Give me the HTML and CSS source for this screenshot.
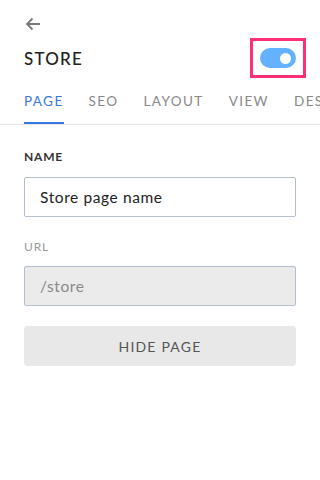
FILE: index.html
```html
<!DOCTYPE html>
<html lang="en">
<head>
  <meta charset="UTF-8" />
  <title>Store</title>
  <meta name="viewport" content="width=device-width, initial-scale=1">
  <link rel="stylesheet" href="styles.css">
</head>
<body>
  <div class="top">
    <a class="back" href="#">
      <svg width="16" height="14" viewBox="0 0 16 14"><path d="M15 7H2M7.5 1.5L2 7l5.5 5.5" fill="none" stroke="#777" stroke-width="1.8"/></svg>
    </a>
    <div class="title-row">
      <h1>STORE</h1>
      <div class="toggle-box">
        <span class="toggle"><span class="knob"></span></span>
      </div>
    </div>
  </div>

  <nav class="tabs">
    <a class="tab active" href="#">PAGE</a>
    <a class="tab" href="#">SEO</a>
    <a class="tab" href="#">LAYOUT</a>
    <a class="tab" href="#">VIEW</a>
    <a class="tab" href="#">DESIGN</a>
  </nav>

  <div class="form">
    <label class="label">NAME</label>
    <input class="field" type="text" value="Store page name">

    <label class="label muted">URL</label>
    <input class="field disabled" type="text" value="/store" disabled>

    <button class="hide-btn">HIDE PAGE</button>
  </div>
</body>
</html>
```

FILE: styles.css
```css
body {
  margin: 0;
  font-family: Lato, "Open Sans", sans-serif;
  background: #fff;
  color: #222;
  overflow: hidden;
}

.top {
  padding: 17px 24px 0;
}

.back {
  display: block;
  width: 16px;
  height: 14px;
  margin-left: 1px;
}

.back svg {
  display: block;
}

.title-row {
  display: flex;
  align-items: center;
  justify-content: space-between;
  margin-top: 7px;
  height: 40px;
  margin-right: -10px;
}

h1 {
  margin: 0;
  font-size: 17px;
  font-weight: 500;
  letter-spacing: 1.2px;
}

.toggle-box {
  border: 3px solid #ff2f74;
  width: 50px;
  height: 34px;
  display: flex;
  align-items: center;
  justify-content: center;
}

.toggle {
  display: block;
  width: 36px;
  height: 20px;
  border-radius: 10px;
  background: #63b1ff;
  position: relative;
}

.knob {
  position: absolute;
  right: 5px;
  top: 5px;
  width: 11px;
  height: 11px;
  border-radius: 50%;
  background: #fff;
}

.tabs {
  display: flex;
  gap: 25px;
  padding: 0 24px;
  margin-top: 15px;
  border-bottom: 1px solid #e6e6e6;
  white-space: nowrap;
  overflow: hidden;
}

.tab {
  font-size: 13.5px;
  letter-spacing: 1.4px;
  color: #888;
  text-decoration: none;
  padding-bottom: 13px;
  border-bottom: 2px solid transparent;
}

.tab.active {
  color: #3a78df;
  border-bottom-color: #3a78df;
}

.form {
  padding: 24px 24px 0;
  display: flex;
  flex-direction: column;
}

.label {
  font-size: 12px;
  font-weight: 700;
  letter-spacing: 0.8px;
  color: #333;
  margin-bottom: 13px;
}

.label.muted {
  font-weight: 400;
  color: #999;
  margin-top: 22px;
  margin-bottom: 12px;
}

.field {
  box-sizing: border-box;
  height: 40px;
  width: 272px;
  border: 1px solid #b1bfce;
  border-radius: 2px;
  padding: 0 15px;
  font: inherit;
  font-size: 15.5px;
  letter-spacing: 0.6px;
  color: #222;
  background: #fff;
}

.field.disabled {
  background: #ebebeb;
  color: #888;
}

.hide-btn {
  margin-top: 20px;
  width: 272px;
  height: 40px;
  border: 0;
  border-radius: 4px;
  background: #e8e8e9;
  font: inherit;
  font-size: 14px;
  letter-spacing: 1.2px;
  color: #555;
}
```
